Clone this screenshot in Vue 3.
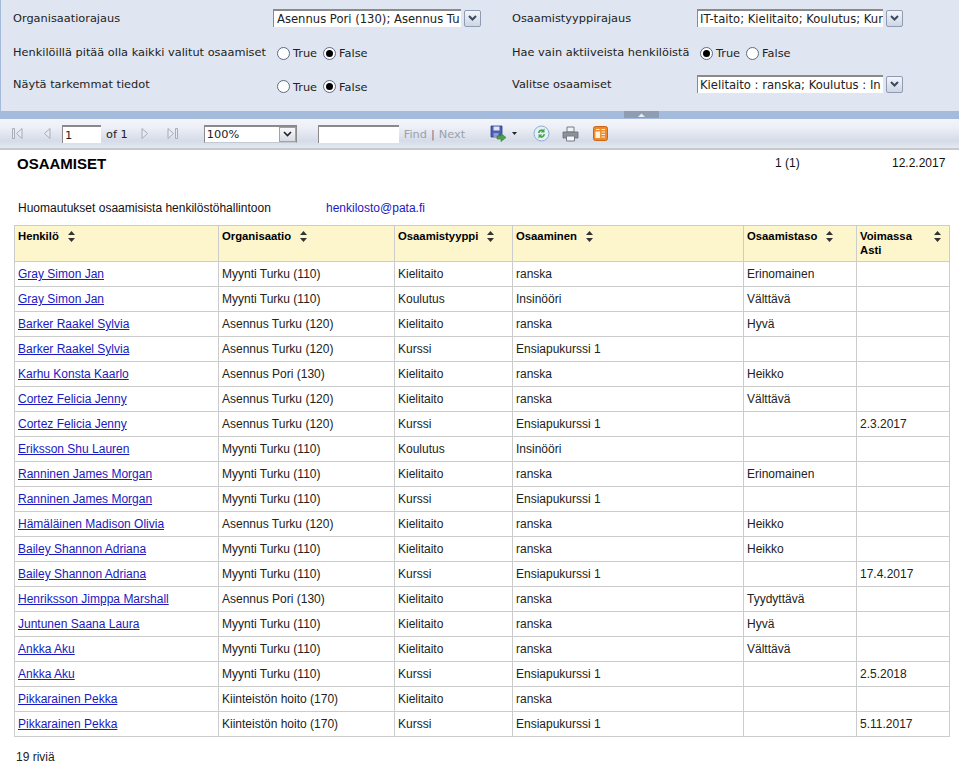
<template>
  <div class="viewer">
    <!-- parametrit -->
    <div class="params">
      <div class="param-col left">
        <div class="param" v-for="p in leftParams" :key="p.label">
          <span class="param-label">{{ p.label }}</span>
          <div v-if="p.text" class="combo">
            <span class="combo-text">{{ p.text }}</span>
            <span class="combo-btn"><svg width="9" height="6" viewBox="0 0 9 6"><path d="M1 1l3.500 3.500L8 1" fill="none" stroke="#3c4a60" stroke-width="2" /></svg></span>
          </div>
          <div v-else class="radios">
            <span class="radio" :class="{ on: p.value }"></span><span class="radio-text">True</span>
            <span class="radio" :class="{ on: !p.value }"></span><span class="radio-text">False</span>
          </div>
        </div>
      </div>
      <div class="param-col right">
        <div class="param" v-for="p in rightParams" :key="p.label">
          <span class="param-label">{{ p.label }}</span>
          <div v-if="p.text" class="combo">
            <span class="combo-text">{{ p.text }}</span>
            <span class="combo-btn"><svg width="9" height="6" viewBox="0 0 9 6"><path d="M1 1l3.500 3.500L8 1" fill="none" stroke="#3c4a60" stroke-width="2" /></svg></span>
          </div>
          <div v-else class="radios">
            <span class="radio" :class="{ on: p.value }"></span><span class="radio-text">True</span>
            <span class="radio" :class="{ on: !p.value }"></span><span class="radio-text">False</span>
          </div>
        </div>
      </div>
    </div>

    <div class="splitter">
      <span class="grip"><svg width="7" height="4" viewBox="0 0 7 4"><path d="M0 4l3.500-3.500L7 4z" fill="#e8edf5" /></svg></span>
    </div>

    <!-- työkalupalkki -->
    <div class="toolbar">
      <div class="pager">
        <svg class="nav first" width="13" height="13" viewBox="0 0 13 13"><path d="M1.500 1.500h2v10h-2zM11 1.500v10L5.500 6.500z" fill="#e8ebf0" stroke="#a6adb7" /></svg>
        <svg class="nav prev" width="13" height="13" viewBox="0 0 13 13"><path d="M9 1.500v10L3.500 6.500z" fill="#e8ebf0" stroke="#a6adb7" /></svg>
        <span class="page-input">1</span>
        <span class="of">of 1</span>
        <svg class="nav next" width="13" height="13" viewBox="0 0 13 13"><path d="M4 1.500v10L9.500 6.500z" fill="#e8ebf0" stroke="#a6adb7" /></svg>
        <svg class="nav" width="13" height="13" viewBox="0 0 13 13"><path d="M2 1.500v10L7.500 6.500zM9.500 1.500h2v10h-2z" fill="#e8ebf0" stroke="#a6adb7" /></svg>
      </div>
      <div class="zoom-select">
        <span class="zoom-text">100%</span>
        <span class="zoom-btn"><svg width="9" height="6" viewBox="0 0 9 6"><path d="M1 1l3.500 3.500L8 1" fill="none" stroke="#222" stroke-width="1.600" /></svg></span>
      </div>
      <span class="find-input"></span>
      <span class="find">Find</span><span class="find-sep">|</span><span class="find">Next</span>
      <svg class="tool save" width="17" height="17" viewBox="0 0 17 17">
        <path d="M1 1h11v11H1z" fill="#4a5fb4" stroke="#2f3f8c" stroke-width=".8" />
        <path d="M3.500 1.500h6v4h-6z" fill="#dfe4f2" />
        <path d="M3.500 8h5v4h-5z" fill="#8f9bd0" />
        <path d="M7 11h4V8.500l5 4-5 4V14H7z" fill="#4fa24a" stroke="#2f7a30" stroke-width=".6" />
      </svg>
      <svg class="caret" width="5" height="3" viewBox="0 0 5 3"><path d="M0 0h5L2.500 3z" fill="#222" /></svg>
      <svg class="tool refresh" width="17" height="17" viewBox="0 0 17 17">
        <circle cx="8.500" cy="8.500" r="7.500" fill="#e6eef8" stroke="#8fabd2" />
        <path d="M5 8A3.800 3.800 0 0 1 10.500 4.700L11.500 3.300V7.500H7.800L9 6.200A2.100 2.100 0 0 0 6.500 8z" fill="#46a546" />
        <path d="M12 9A3.800 3.800 0 0 1 6.500 12.300L5.500 13.700V9.500H9.200L8 10.800A2.100 2.100 0 0 0 10.500 9z" fill="#46a546" />
      </svg>
      <svg class="tool print" width="17" height="16" viewBox="0 0 17 16">
        <path d="M5 1h7v5H5z" fill="#f1f2f4" stroke="#757c86" />
        <path d="M1 6h15v6H1z" fill="#8b929c" stroke="#666d77" stroke-width=".8" />
        <path d="M4.500 10h8v5h-8z" fill="#f6f6f6" stroke="#757c86" />
      </svg>
      <svg class="tool layout" width="15" height="15" viewBox="0 0 15 15">
        <rect x=".5" y=".5" width="14" height="14" rx="2" fill="#ee8a2e" stroke="#c9651a" />
        <path d="M3 3.500h3.500M8.500 3.500H12M8.500 6H12M8.500 8.500H12M8.500 11H12M3 6v5.500h3.500V6z" stroke="#fff3dc" fill="#fff3dc" stroke-width="1.200" />
      </svg>
    </div>

    <!-- raportti -->
    <div class="report">
      <div class="report-top">
        <h1 class="title">OSAAMISET</h1>
        <span class="page-no">1 (1)</span>
        <span class="date">12.2.2017</span>
      </div>
      <div class="notice">
        <span class="notice-text">Huomautukset osaamisista henkilöstöhallintoon</span>
        <span class="mail">henkilosto@pata.fi</span>
      </div>
      <table class="grid">
        <colgroup>
          <col v-for="w in colWidths" :key="w" :style="{ width: w + 'px' }" />
        </colgroup>
        <thead>
          <tr>
            <th v-for="(h, i) in headers" :key="h">
              <div class="th-in" :class="{ wide: i === 5 }">
                <span class="th-text">{{ h }}</span>
                <svg class="sort" width="7" height="11" viewBox="0 0 7 11"><path d="M3.500 0L7 4H0zM0 7h7l-3.500 4z" fill="#333" /></svg>
              </div>
            </th>
          </tr>
        </thead>
        <tbody>
          <tr v-for="(r, i) in rows" :key="i">
            <td><a class="person">{{ r[0] }}</a></td>
            <td>{{ r[1] }}</td>
            <td>{{ r[2] }}</td>
            <td>{{ r[3] }}</td>
            <td>{{ r[4] }}</td>
            <td>{{ r[5] }}</td>
          </tr>
        </tbody>
      </table>
      <div class="count">19 riviä</div>
    </div>
  </div>
</template>

<script setup>
const leftParams = [
  { label: 'Organisaatiorajaus', text: 'Asennus Pori (130); Asennus Tu' },
  { label: 'Henkilöillä pitää olla kaikki valitut osaamiset', value: false },
  { label: 'Näytä tarkemmat tiedot', value: false }
]

const rightParams = [
  { label: 'Osaamistyyppirajaus', text: 'IT-taito; Kielitaito; Koulutus; Kur' },
  { label: 'Hae vain aktiiveista henkilöistä', value: true },
  { label: 'Valitse osaamiset', text: 'Kielitaito : ranska; Koulutus : In' }
]

const colWidths = [204, 176, 118, 231, 113, 93]

const headers = ['Henkilö', 'Organisaatio', 'Osaamistyyppi', 'Osaaminen', 'Osaamistaso', 'Voimassa Asti']

const rows = [
  ['Gray Simon Jan', 'Myynti Turku (110)', 'Kielitaito', 'ranska', 'Erinomainen', ''],
  ['Gray Simon Jan', 'Myynti Turku (110)', 'Koulutus', 'Insinööri', 'Välttävä', ''],
  ['Barker Raakel Sylvia', 'Asennus Turku (120)', 'Kielitaito', 'ranska', 'Hyvä', ''],
  ['Barker Raakel Sylvia', 'Asennus Turku (120)', 'Kurssi', 'Ensiapukurssi 1', '', ''],
  ['Karhu Konsta Kaarlo', 'Asennus Pori (130)', 'Kielitaito', 'ranska', 'Heikko', ''],
  ['Cortez Felicia Jenny', 'Asennus Turku (120)', 'Kielitaito', 'ranska', 'Välttävä', ''],
  ['Cortez Felicia Jenny', 'Asennus Turku (120)', 'Kurssi', 'Ensiapukurssi 1', '', '2.3.2017'],
  ['Eriksson Shu Lauren', 'Myynti Turku (110)', 'Koulutus', 'Insinööri', '', ''],
  ['Ranninen James Morgan', 'Myynti Turku (110)', 'Kielitaito', 'ranska', 'Erinomainen', ''],
  ['Ranninen James Morgan', 'Myynti Turku (110)', 'Kurssi', 'Ensiapukurssi 1', '', ''],
  ['Hämäläinen Madison Olivia', 'Asennus Turku (120)', 'Kielitaito', 'ranska', 'Heikko', ''],
  ['Bailey Shannon Adriana', 'Myynti Turku (110)', 'Kielitaito', 'ranska', 'Heikko', ''],
  ['Bailey Shannon Adriana', 'Myynti Turku (110)', 'Kurssi', 'Ensiapukurssi 1', '', '17.4.2017'],
  ['Henriksson Jimppa Marshall', 'Asennus Pori (130)', 'Kielitaito', 'ranska', 'Tyydyttävä', ''],
  ['Juntunen Saana Laura', 'Myynti Turku (110)', 'Kielitaito', 'ranska', 'Hyvä', ''],
  ['Ankka Aku', 'Myynti Turku (110)', 'Kielitaito', 'ranska', 'Välttävä', ''],
  ['Ankka Aku', 'Myynti Turku (110)', 'Kurssi', 'Ensiapukurssi 1', '', '2.5.2018'],
  ['Pikkarainen Pekka', 'Kiinteistön hoito (170)', 'Kielitaito', 'ranska', '', ''],
  ['Pikkarainen Pekka', 'Kiinteistön hoito (170)', 'Kurssi', 'Ensiapukurssi 1', '', '5.11.2017']
]
</script>

<style>
html, body {
  margin: 0;
  background: #fff;
}
</style>

<style scoped>
.viewer {
  width: 959px;
  height: 764px;
  overflow: hidden;
  font-family: "Liberation Sans", Arial, sans-serif;
  color: #111;
}

.params {
  height: 111px;
  box-sizing: border-box;
  display: flex;
  background: #dfe6f1;
  border-left: 1px solid #a5bbdb;
  padding: 9px 0 0 12px;
  font-family: "DejaVu Sans", sans-serif;
  font-size: 11.350px;
  color: #222;
}

.param-col {
  display: flex;
  flex-direction: column;
  gap: 15px;
}

.param-col.left {
  width: 499px;
}

.param {
  display: flex;
  align-items: center;
  height: 18.500px;
}

.param:last-child .param-label,
.param:last-child .combo {
  margin-top: -2px;
}

.left .param-label {
  width: 260px;
}

.right .param-label {
  width: 185px;
}

.combo {
  display: flex;
  align-items: center;
  gap: 3px;
}

.combo-text {
  width: 188px;
  height: 18px;
  box-sizing: border-box;
  line-height: 17px;
  padding-left: 3px;
  background: #fff;
  border-top: 2px solid #8a8a8a;
  border-left: 1px solid #8a8a8a;
  overflow: hidden;
  white-space: nowrap;
  font-size: 11.600px;
}

.right .combo-text {
  width: 186px;
  padding-left: 2px;
}

.combo-btn {
  width: 17px;
  height: 17px;
  box-sizing: border-box;
  display: flex;
  align-items: center;
  justify-content: center;
  background: linear-gradient(#f4f6fa, #cdd6e4);
  border: 1px solid #8f9bb0;
  border-radius: 2px;
}

.radios {
  display: flex;
  align-items: center;
  margin-top: 3px;
  margin-left: 4px;
}

.right .radios {
  margin-left: 3px;
}

.radio {
  width: 13px;
  height: 13px;
  box-sizing: border-box;
  border: 1px solid #5c6a80;
  border-radius: 50%;
  background: #fff;
  position: relative;
}

.radio.on::after {
  content: "";
  position: absolute;
  left: 2px;
  top: 2px;
  width: 7px;
  height: 7px;
  border-radius: 50%;
  background: #000;
}

.radio-text {
  margin: 0 6px 0 3px;
}

.splitter {
  height: 8px;
  background: #a5bbdb;
  padding-left: 624px;
}

.grip {
  display: flex;
  width: 35px;
  height: 7px;
  align-items: center;
  justify-content: center;
  background: #8f9db3;
}

.toolbar {
  height: 31px;
  box-sizing: border-box;
  display: flex;
  align-items: center;
  padding-left: 11px;
  background: linear-gradient(#f3f5fa, #eceff6 30%, #d5dbe8 75%, #e4e8f0);
  border-bottom: 2px solid #c6c9ce;
  font-family: "DejaVu Sans", sans-serif;
  font-size: 11.350px;
}

.pager {
  display: flex;
  align-items: center;
}

.nav {
  flex: none;
}

.first {
  margin-right: 17px;
}

.prev {
  margin-right: 8px;
}

.next {
  margin-right: 15px;
}

.page-input {
  width: 39px;
  height: 18px;
  box-sizing: border-box;
  background: #fff;
  border-top: 2px solid #8a8a8a;
  border-left: 1px solid #8a8a8a;
  padding-left: 2px;
  line-height: 16px;
  color: #222;
}

.of {
  margin: 0 10px 0 5px;
  color: #222;
}

.zoom-select {
  display: flex;
  align-items: center;
  justify-content: space-between;
  width: 93px;
  height: 18px;
  box-sizing: border-box;
  margin-left: 25px;
  background: #fff;
  border-top: 2px solid #8a8a8a;
  border-left: 1px solid #8a8a8a;
  border-right: 1px solid #8a8a8a;
  border-bottom: 1px solid #c4c8d0;
}

.zoom-text {
  padding-left: 2px;
  color: #222;
}

.zoom-btn {
  width: 17px;
  height: 15px;
  display: flex;
  align-items: center;
  justify-content: center;
  background: linear-gradient(#f8f9fb, #d6dbe4);
  border: 1px solid #9aa3b2;
  box-sizing: border-box;
}

.find-input {
  width: 81px;
  height: 18px;
  box-sizing: border-box;
  margin: 0 5px 0 21px;
  background: #fff;
  border-top: 2px solid #8a8a8a;
  border-left: 1px solid #8a8a8a;
}

.find {
  color: #9aa1ac;
}

.find-sep {
  margin: 0 4px;
  color: #6a7280;
}

.tool {
  flex: none;
}

.save {
  margin-left: 25px;
}

.caret {
  margin: 0 0 0 5px;
}

.refresh {
  margin-left: 16px;
}

.print {
  margin-left: 12px;
}

.layout {
  margin-left: 14px;
}

.report {
  padding: 0 9px 0 14px;
  font-size: 12px;
}

.report-top {
  display: flex;
  align-items: flex-start;
  height: 44px;
  padding-top: 6px;
  box-sizing: border-box;
}

.title {
  margin: -1px 0 0 3px;
  width: 758px;
  font-size: 15px;
  line-height: 17px;
  font-weight: bold;
  color: #000;
}

.page-no {
  width: 117px;
  line-height: 14px;
}

.date {
  line-height: 14px;
}

.notice {
  display: flex;
  height: 31px;
  padding: 7px 0 0 4px;
  box-sizing: border-box;
  line-height: 15px;
}

.notice-text {
  width: 308px;
}

.mail {
  color: #1a1ac0;
}

.grid {
  table-layout: fixed;
  width: 935px;
  border-collapse: collapse;
  border: 1px solid #cccccc;
}

.grid th,
.grid td {
  border: 1px solid #cccccc;
  padding: 0 3px;
  text-align: left;
  vertical-align: middle;
}

.grid th {
  height: 36px;
  background: #fdf6cc;
  vertical-align: top;
  padding-top: 3px;
  box-sizing: border-box;
  font-size: 11.300px;
  font-weight: bold;
  color: #000;
  line-height: 14px;
}

.th-in {
  display: flex;
  align-items: flex-start;
  gap: 9px;
}

.th-in.wide {
  justify-content: space-between;
  gap: 0;
  padding-right: 5px;
}

.th-in.wide .th-text {
  width: 60px;
}

.sort {
  margin-top: 2px;
  flex: none;
}

.grid td {
  height: 25px;
  box-sizing: border-box;
  white-space: nowrap;
  color: #222;
}

.person {
  color: #1a1ac0;
  text-decoration: underline;
}

.count {
  margin: 13px 0 0 2px;
  line-height: 15px;
  color: #222;
}
</style>
